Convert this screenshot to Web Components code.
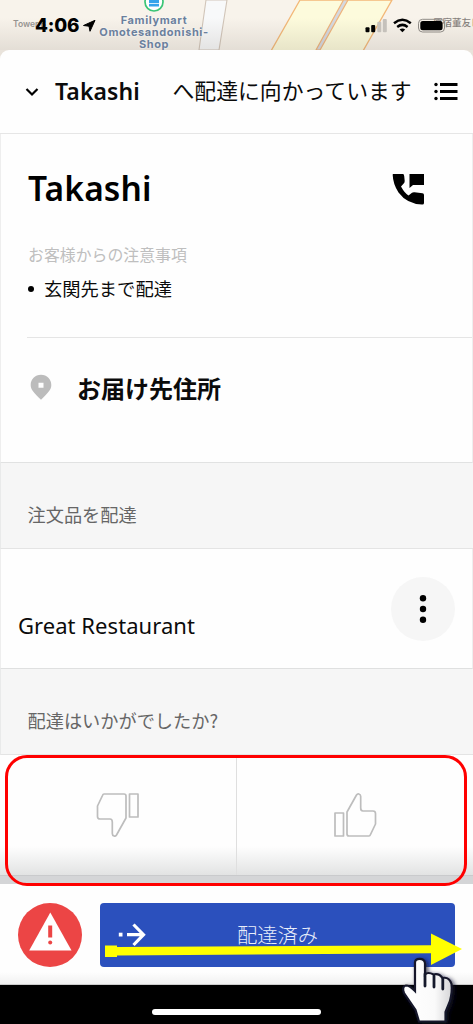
<!DOCTYPE html>
<html lang="ja">
<head>
<meta charset="utf-8">
<title>配達</title>
<style>
html,body{margin:0;background:#000}
body{width:473px;height:1024px;overflow:hidden;font-family:"Noto Sans CJK JP","Noto Sans",sans-serif;color:#0b0b0b}
</style>
</head>
<body>
<delivery-app></delivery-app>
<script>
function define(name, html) {
  const t = document.createElement('template');
  t.innerHTML = html;
  customElements.define(name, class extends HTMLElement {
    constructor() {
      super();
      this.attachShadow({ mode: 'open' }).appendChild(t.content.cloneNode(true));
    }
  });
}

define('map-strip', `
<style>
:host{display:block;position:relative;height:50px;background:#f8f3eb;overflow:hidden}
svg{display:block}
.shade{position:absolute;inset:0;background:linear-gradient(rgba(90,80,70,0) 35%,rgba(90,80,70,.13))}
.t{position:absolute;white-space:nowrap}
.tower{left:13px;top:18px;font:600 8.5px/12px Inter,sans-serif;color:#969390}
.shop{left:94px;top:14px;width:120px;text-align:center;font:700 11px/12px Inter,sans-serif;letter-spacing:.6px;color:#6b809d;text-shadow:0 0 2px #fff}
.jp{left:433px;top:16px;font:500 9.5px/13px "Noto Sans CJK JP",sans-serif;color:#88837e}
.clock{left:35px;top:15px;font:800 18.8px/22px Inter,sans-serif;color:#000;letter-spacing:-.2px}
.over{position:absolute;left:0;top:0}
</style>
<svg width="473" height="50" viewBox="0 0 473 50">
 <path d="M206 0H227L219 50H199Z" fill="#f8f9fa" stroke="#d1c5b9" stroke-width="1.1"/>
 <path d="M300 0H392L363 51H271Z" fill="#fdfbdc" stroke="#f3b878" stroke-width="1.3"/>
 <path d="M343.5 0H348L320 50H316Z" fill="#d5d8df" stroke="#efb47b" stroke-width="1.2"/>
 <circle cx="154" cy="2" r="9" fill="#fff" stroke="#3bc576" stroke-width="1.7"/>
 <path d="M149-3H159V6.500H149Z" fill="#36a3eb"/><path d="M149 3.500H159" stroke="#fff" stroke-width=".8"/>
</svg>
<div class="shade"></div>
<span class="t tower">Tower B</span>
<div class="t shop">Familymart<br>Omotesandonishi-<br>Shop</div>
<span class="t jp">原宿董友ビ</span>
<span class="t clock">4:06</span>
<svg class="over" width="473" height="50" viewBox="0 0 473 50">
 <path d="M95 20.300 83.500 25.500 89 26.200 90 31.300Z" stroke="#000" stroke-linejoin="round"/>
 <rect x="365.5" y="27.3" width="4" height="5" rx="1"/><rect x="371.2" y="25" width="4" height="7.3" rx="1"/>
 <rect x="377.3" y="21.7" width="4" height="10.6" rx="1" fill="#c5c1bb"/><rect x="382.8" y="19" width="4" height="13.3" rx="1" fill="#c5c1bb"/>
 <g fill="none" stroke="#000" stroke-width="2.5"><path d="M394 23.2Q402.400 16.400 410.800 23.2"/><path d="M397.200 26.900Q402.400 22.900 407.600 26.900"/></g>
 <path d="M399.600 29.500Q402.400 27.500 405.200 29.500L402.400 32.300Z"/>
 <rect x="418.500" y="19.300" width="26" height="12.700" rx="4" fill="none" stroke="#8f8b86" stroke-width="1"/>
 <rect x="420.300" y="21" width="22.300" height="9.300" rx="2.500"/><path d="M446 23.500Q448 25.600 446 27.700Z" fill="#88837e"/>
</svg>`);

define('trip-header', `
<style>
:host{display:flex;align-items:center;height:84px;box-sizing:border-box;padding:0 15px 0 25px;background:#fefefe;border-bottom:1.500px solid #e6e6e6;border-radius:9px 9px 0 0}
.name{width:117.500px;margin-left:16px;font:600 23px/34px "Noto Sans",sans-serif;letter-spacing:.1px}
.msg{font:400 21.850px/34px "Noto Sans CJK JP",sans-serif;flex:1;white-space:nowrap}
svg{flex:none}
.name,.msg{position:relative;top:-1px}
.msg{top:-2px}
</style>
<svg width="14" height="14" viewBox="0 0 14 14"><path d="M1.500 4 7 9.500 12.500 4" fill="none" stroke="#000" stroke-width="2.200"/></svg>
<span class="name"><slot name="name"></slot></span><span class="msg"><slot></slot></span>
<svg width="24" height="20" viewBox="0 0 24 20"><path d="M6 2.500H23.500M6 9.500H23.500M6 16.500H23.500" stroke="#000" stroke-width="3"/><g><circle cx="2" cy="2.500" r="1.700"/><circle cx="2" cy="9.500" r="1.700"/><circle cx="2" cy="16.500" r="1.700"/></g></svg>`);

define('customer-card', `
<style>
:host{display:flex;flex-direction:column;height:329px;box-sizing:border-box;background:#fefefe;border-bottom:1.500px solid #e1e2e2;border-left:1px solid #eee;border-right:1px solid #eee;padding-left:27px}
.top{display:flex;justify-content:space-between;padding:30px 47.500px 0 0;height:77.500px}
h1{margin:0;font:600 33.500px/48px "Noto Sans",sans-serif;letter-spacing:.15px;color:#000}
.top svg{margin-top:9px}
.cap{font-size:15.900px;line-height:24px;color:#bfbfbf;padding-top:1.500px}
.note{display:flex;align-items:center;gap:9px;font-size:18.300px;line-height:28px;margin-top:7px}
.note i{width:6px;height:6px;border-radius:50%;background:#000;margin:2px 0 0}
.note slot{display:block;padding-left:1px}
.drop{display:flex;gap:25px;align-items:center;border-top:1.500px solid #e5e5e5;margin-top:35px;height:99px;padding-left:3px;font:700 24px/36px "Noto Sans CJK JP",sans-serif;margin-left:-1px}
</style>
<div class="top"><h1><slot name="name"></slot></h1>
<svg width="33" height="33" viewBox="0 0 33 33"><path d="M1 1H11Q12 1 12.200 3L12.700 8Q12.800 9.500 11.500 10.800L9 13.500Q12.500 20 16.500 22.500L20 19.800Q21 19 22.500 19.200L30.500 20.200Q32 20.500 32 22V30Q32 31.700 30 31.500Q15 31 6.500 19.500Q1 11 .7 2Q.7 1 1 1Z"/><path d="M17.500 1H32V12H21L17.500 15Z"/></svg></div>
<div class="cap"><slot name="caption"></slot></div>
<div class="note"><i></i><slot name="note"></slot></div>
<div class="drop"><svg width="22" height="27" viewBox="0 0 22 27"><path fill-rule="evenodd" fill="#bcbcbc" d="M11 .8C17 .8 21.300 5.200 21.300 11C21.300 15.500 18.500 18.500 11 25.800C3.500 18.500.7 15.500.7 11C.7 5.200 5 .8 11 .8ZM8.500 8.700V13.700H13.500V8.700Z"/></svg><slot name="address"></slot></div>`);

define('section-label', `
<style>
:host{display:flex;align-items:center;height:86px;box-sizing:border-box;padding:16px 0 0 26.500px;background:#f6f6f6;border-bottom:1.500px solid #e4e4e4;border-left:1px solid #e9eaea;font-size:18.200px;line-height:28px;color:#666}
</style><slot></slot>`);

define('merchant-row', `
<style>
:host{display:flex;justify-content:space-between;height:120px;box-sizing:border-box;padding:28px 17px 0 17px;background:#fefefe;border-bottom:1.500px solid #dfe0e0;border-left:1px solid #eee;border-right:1px solid #eee;font:400 22px/32px "Noto Sans",sans-serif;letter-spacing:.05px}
span{padding-top:32px}
button{all:unset;width:64px;height:64px;border-radius:50%;background:#f6f6f6;display:grid;place-items:center}
</style><span><slot></slot></span>
<button aria-label="メニュー"><svg width="8" height="30" viewBox="0 0 8 30"><circle cx="4" cy="4.300" r="3.200"/><circle cx="4" cy="15" r="3.200"/><circle cx="4" cy="25.700" r="3.200"/></svg></button>`);

define('rating-panel', `
<style>
:host{display:block;position:relative;height:129px}
.cells{display:grid;grid-template-columns:237px 1fr;height:120px;background:linear-gradient(#fefefe 76%,#e2e3e3)}
.cells div{display:grid;place-items:center}
.cells div:first-child{border-right:1.500px solid #dfdfdf}
.band{height:9px;background:#d4d5d7;border-top:1px solid #c9cacc;box-sizing:border-box}
.ring{position:absolute;left:5px;top:0;width:462px;height:131px;box-sizing:border-box;border:3px solid #f00;border-radius:22px;z-index:1}
svg{fill:none;stroke:#bdbdbd;stroke-width:1.700;stroke-linejoin:round}
</style>
<div class="cells"><div><svg width="44" height="46" viewBox="0 0 44 46"><path d="M8 2H28Q30 2 30 4V26L20.500 43Q19.500 44.500 18 44Q16.300 43.500 16.300 41.500V30Q16.300 27 14 27H4Q1.500 27 1.500 24.500V14L6.500 3.500Q7 2 8 2ZM33.500 2H42V25H33.500Z"/></svg></div>
<div><svg width="44" height="46" viewBox="0 0 44 46"><path d="M36 44H16Q14 44 14 42V20L23.500 3Q24.500 1.500 26 2Q27.700 2.500 27.700 4.500V16Q27.700 19 30 19H40Q42.500 19 42.500 21.500V32L37.500 42.500Q37 44 36 44ZM10.500 44H2V21H10.500Z"/></svg></div></div>
<div class="band"></div><div class="ring"></div>`);

define('action-bar', `
<style>
:host{display:flex;gap:18px;height:101px;box-sizing:border-box;padding:19px 18px 0;background:linear-gradient(#fefefe 88%,#f1f1f1);border-bottom:1px solid #ccc;position:relative}
.swipe{flex:1;height:64px;box-sizing:border-box;border-radius:4px;background:#2b50bd;color:#e8edfa;display:grid;grid-template-columns:18px 30px 1fr;align-items:center;font:300 20.300px/30px "Noto Sans CJK JP",sans-serif}
.swipe svg{grid-column:2}
.swipe span{padding:0 0 3px 89px}
.arrow{position:absolute;left:100px;top:40px;z-index:2}
</style>
<svg width="64" height="64" viewBox="0 0 64 64"><circle cx="32" cy="32" r="32" fill="#ec4545"/><path d="M32.300 9.500 53.500 47.500H11.200Z" fill="#fff"/><path d="M30.200 22.500H34.200V34.500H30.200Z" fill="#ec4545"/><circle cx="32.200" cy="39.500" r="2" fill="#ec4545"/></svg>
<div class="swipe"><svg width="30" height="24" viewBox="0 0 30 24"><path d="M.8 9.700H4.500V13.500H.8Z" fill="#fff"/><path d="M9 11.700H25M15.500 1.500 25.500 11.700 15.500 22" stroke="#fff" stroke-width="3.200" fill="none"/></svg><span><slot></slot></span></div>
<svg class="arrow" width="373" height="100" viewBox="100 924 373 100">
<defs><linearGradient id="g" x2="1" y2="0"><stop stop-color="#fff"/><stop offset=".65" stop-color="#fafafa"/><stop offset="1" stop-color="#d5d5d7"/></linearGradient><filter id="s" x="-30%" y="-20%" width="160%" height="150%"><feDropShadow dx="2" dy="1.500" stdDeviation="2" flood-color="#101526" flood-opacity=".75"/></filter></defs>
<path d="M105 945.500H117V947L431 945.300V933.500L462 949 431 965V953.200L117 955.500V957H105Z" fill="#ff0"/>
<path filter="url(#s)" d="M415 962.500Q415 958.800 419.500 958.800Q424.800 958.800 425 963.500V974.500Q428 971.500 433.500 974.500Q439 973 442.500 978Q449 976.500 451.500 984Q452.500 991 450 1001L445.500 1012V1021.500H419L415.500 1010 404 993Q401.500 986.500 406 985.500Q409.500 985.500 415 991Z" fill="url(#g)" stroke="#15192b" stroke-width="2.200"/>
<path d="M425 974V986M434 976V987M442.800 979V989" stroke="#15192b" stroke-width="2.800" stroke-linecap="round"/>
</svg>`);

define('home-indicator', `
<style>:host{display:flex;justify-content:center;height:39px;background:#000;padding-top:24px;box-sizing:border-box}i{width:169px;height:6px;border-radius:3px;background:#fff}</style><i></i>`);

define('delivery-app', `
<style>
:host{display:flex;flex-direction:column;width:473px;height:1024px;background:#e9e3db}
:host>*{flex:none}
</style>
<map-strip></map-strip>
<trip-header><span slot="name">Takashi</span>へ配達に向かっています</trip-header>
<customer-card><span slot="name">Takashi</span><span slot="caption">お客様からの注意事項</span><span slot="note">玄関先まで配達</span><span slot="address">お届け先住所</span></customer-card>
<section-label>注文品を配達</section-label>
<merchant-row>Great Restaurant</merchant-row>
<section-label>配達はいかがでしたか?</section-label>
<rating-panel></rating-panel>
<action-bar>配達済み</action-bar>
<home-indicator></home-indicator>`);
</script>
</body>
</html>
